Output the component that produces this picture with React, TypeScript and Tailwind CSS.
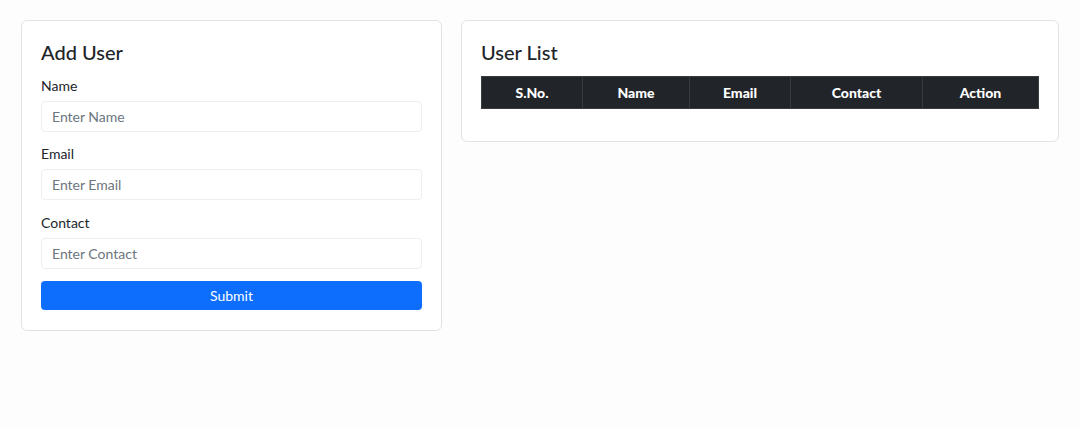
import React, { useState } from "react";

interface UserType {
  name: string;
  email: string;
  contact: string;
}

const columns = [
  { label: "S.No.", width: "w-[101px]" },
  { label: "Name", width: "w-[107px]" },
  { label: "Email", width: "w-[101px]" },
  { label: "Contact", width: "w-[132px]" },
  { label: "Action", width: "" },
];

const App: React.FC = () => {
  const [form, setForm] = useState<UserType>({ name: "", email: "", contact: "" });
  const [users, setUsers] = useState<UserType[]>([]);

  const handleSubmit = (e: React.FormEvent) => {
    e.preventDefault();
    if (!form.name) return;
    setUsers((prev) => [...prev, form]);
    setForm({ name: "", email: "", contact: "" });
  };

  const fields: { key: keyof UserType; label: string; gap: string }[] = [
    { key: "name", label: "Name", gap: "mt-3" },
    { key: "email", label: "Email", gap: "mt-3" },
    { key: "contact", label: "Contact", gap: "mt-[13px]" },
  ];

  return (
    <div className="min-h-[429px] w-full bg-[#fdfdfd] font-['Lato','Noto_Sans',sans-serif] text-[#212529]">
      <div className="flex items-start gap-[19px] px-[21px] pt-5">
        {/* Form card */}
        <form
          onSubmit={handleSubmit}
          className="w-[421px] shrink-0 rounded-md border border-[#dfe2e6] bg-white px-[19px] pt-[19px] pb-5"
        >
          <h2 className="text-[20px] leading-6 font-medium">Add User</h2>
          {fields.map((f) => (
            <div key={f.key} className={f.gap}>
              <label className="block text-[14px] leading-5 mb-[5px]">{f.label}</label>
              <input
                value={form[f.key]}
                onChange={(e) => setForm({ ...form, [f.key]: e.target.value })}
                placeholder={`Enter ${f.label}`}
                className="block h-[31px] w-full rounded border border-[#eceef0] px-[10px] text-[14px] text-[#212529] placeholder:text-[#6c757d] outline-none"
              />
            </div>
          ))}
          <button
            type="submit"
            className="mt-3 block h-[29px] w-full rounded bg-[#0d6efd] text-[14px] text-white"
          >
            Submit
          </button>
        </form>

        {/* List card */}
        <div className="flex-1 rounded-md border border-[#dfe2e6] bg-white px-[19px] pt-[19px] pb-8">
          <h2 className="text-[20px] leading-6 font-medium">User List</h2>
          <table className="mt-3 w-full border-collapse text-[14px]">
            <thead>
              <tr className="h-8 bg-[#212529] text-white">
                {columns.map((c) => (
                  <th key={c.label} className={`${c.width} border border-[#373b3e] font-black text-center`}>
                    {c.label}
                  </th>
                ))}
              </tr>
            </thead>
            <tbody>
              {users.map((u, i) => (
                <tr key={i} className="h-8 text-center">
                  <td className="border border-[#dee2e6]">{i + 1}</td>
                  <td className="border border-[#dee2e6]">{u.name}</td>
                  <td className="border border-[#dee2e6]">{u.email}</td>
                  <td className="border border-[#dee2e6]">{u.contact}</td>
                  <td className="border border-[#dee2e6]">
                    <button
                      onClick={() => setUsers((prev) => prev.filter((_, j) => j !== i))}
                      className="rounded bg-red-600 px-2 py-0.5 text-xs text-white"
                    >
                      Delete
                    </button>
                  </td>
                </tr>
              ))}
            </tbody>
          </table>
        </div>
      </div>
    </div>
  );
};

export default App;
